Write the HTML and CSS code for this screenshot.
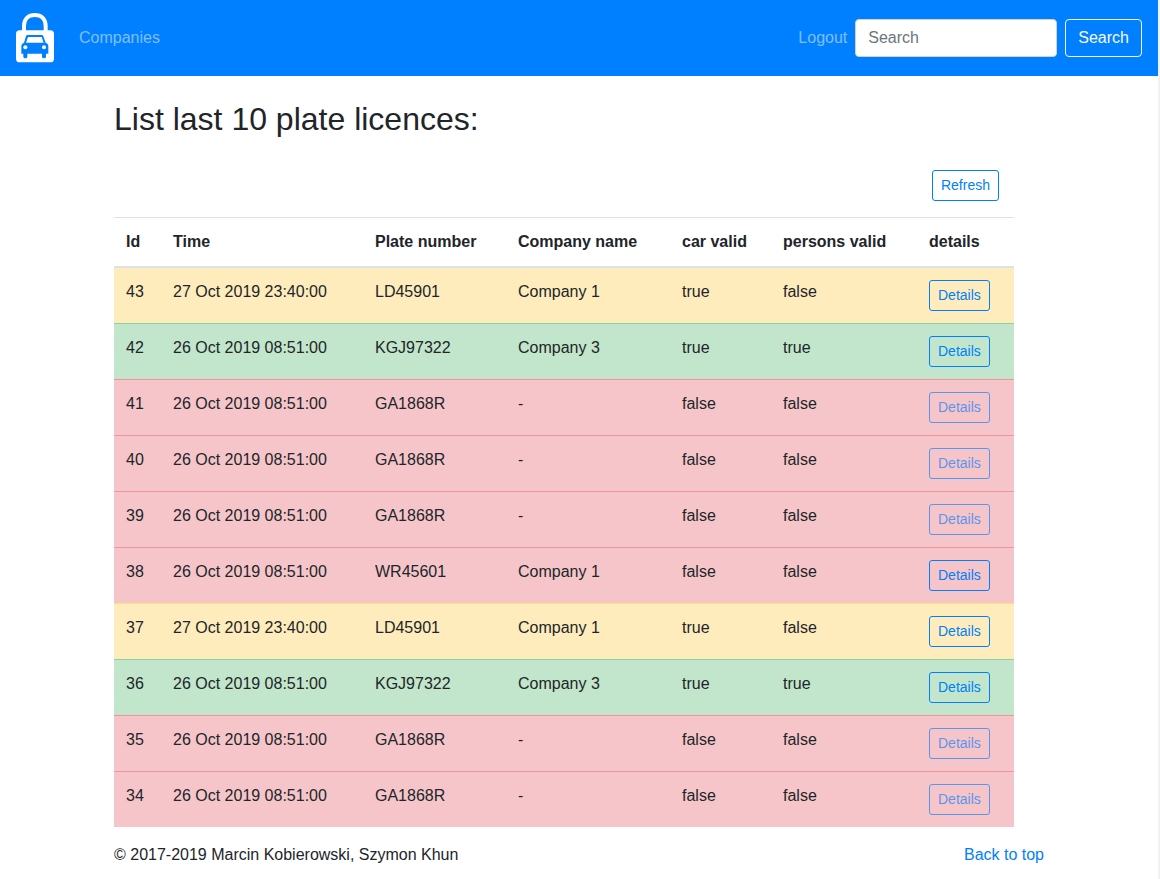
FILE: index.html
```html
<!DOCTYPE html>
<html lang="en">
<head>
<meta charset="utf-8">
<title>Plate licences</title>
<link rel="stylesheet" href="styles.css">
</head>
<body>
<nav class="navbar">
  <a class="brand" href="#" aria-label="Home">
    <svg class="logo" viewBox="48 38 117 150" aria-hidden="true">
      <path d="M72 96V77C72 54 86 44 104.500 44S137 54 137 77V96" fill="none" stroke="#fff" stroke-width="12"/>
      <rect x="48" y="90" width="114" height="96" rx="11" fill="#fff"/>
      <path fill="#007fff" fill-rule="evenodd" d="M83 104H125Q129 104 130 108L137 127Q145 129 145 137V160H138V169Q138 174 132 174T126 169V160H82V169Q82 174 76 174T70 169V160H64V137Q64 129 72 127L78 108Q79 104 83 104ZM84 110L78 127H131L125 110Z"/>
      <circle cx="76" cy="141" r="6" fill="#fff"/>
      <circle cx="132" cy="141" r="6" fill="#fff"/>
    </svg>
  </a>
  <a class="nav-link" href="#">Companies</a>
  <form class="search" onsubmit="return false">
    <a class="nav-link" href="#">Logout</a>
    <input class="search-input" type="search" placeholder="Search" aria-label="Search">
    <button class="btn btn-light" type="submit">Search</button>
  </form>
</nav>
<main class="container">
  <h2 class="title">List last 10 plate licences:</h2>
  <div class="panel">
    <div class="toolbar"><button class="btn btn-small" type="button">Refresh</button></div>
    <table class="table">
      <colgroup><col class="col-id"><col class="col-time"><col class="col-plate"><col class="col-company"><col class="col-car"><col class="col-persons"><col></colgroup>
      <thead>
        <tr><th>Id</th><th>Time</th><th>Plate number</th><th>Company name</th><th>car valid</th><th>persons valid</th><th>details</th></tr>
      </thead>
      <tbody>
        <tr class="warning"><td>43</td><td>27 Oct 2019 23:40:00</td><td>LD45901</td><td>Company 1</td><td>true</td><td>false</td><td><button class="btn btn-small" type="button">Details</button></td></tr>
        <tr class="success"><td>42</td><td>26 Oct 2019 08:51:00</td><td>KGJ97322</td><td>Company 3</td><td>true</td><td>true</td><td><button class="btn btn-small" type="button">Details</button></td></tr>
        <tr class="danger"><td>41</td><td>26 Oct 2019 08:51:00</td><td>GA1868R</td><td>-</td><td>false</td><td>false</td><td><button class="btn btn-small" type="button" disabled>Details</button></td></tr>
        <tr class="danger"><td>40</td><td>26 Oct 2019 08:51:00</td><td>GA1868R</td><td>-</td><td>false</td><td>false</td><td><button class="btn btn-small" type="button" disabled>Details</button></td></tr>
        <tr class="danger"><td>39</td><td>26 Oct 2019 08:51:00</td><td>GA1868R</td><td>-</td><td>false</td><td>false</td><td><button class="btn btn-small" type="button" disabled>Details</button></td></tr>
        <tr class="danger"><td>38</td><td>26 Oct 2019 08:51:00</td><td>WR45601</td><td>Company 1</td><td>false</td><td>false</td><td><button class="btn btn-small" type="button">Details</button></td></tr>
        <tr class="warning"><td>37</td><td>27 Oct 2019 23:40:00</td><td>LD45901</td><td>Company 1</td><td>true</td><td>false</td><td><button class="btn btn-small" type="button">Details</button></td></tr>
        <tr class="success"><td>36</td><td>26 Oct 2019 08:51:00</td><td>KGJ97322</td><td>Company 3</td><td>true</td><td>true</td><td><button class="btn btn-small" type="button">Details</button></td></tr>
        <tr class="danger"><td>35</td><td>26 Oct 2019 08:51:00</td><td>GA1868R</td><td>-</td><td>false</td><td>false</td><td><button class="btn btn-small" type="button" disabled>Details</button></td></tr>
        <tr class="danger"><td>34</td><td>26 Oct 2019 08:51:00</td><td>GA1868R</td><td>-</td><td>false</td><td>false</td><td><button class="btn btn-small" type="button" disabled>Details</button></td></tr>
      </tbody>
    </table>
  </div>
  <footer class="footer">
    <span>© 2017-2019 Marcin Kobierowski, Szymon Khun</span>
    <a class="link" href="#">Back to top</a>
  </footer>
</main>
</body>
</html>
```
FILE: styles.css
```css
*, *::before, *::after { box-sizing: border-box; }
html { min-height: 100%; background: #fff; border-right: 2px solid #f1f1f1; }
body {
  margin: 0;
  font: 16px/24px "Liberation Sans", Arial, sans-serif;
  color: #212529;
}
.navbar {
  display: flex;
  align-items: center;
  min-height: 76px;
  padding: 8px 16px;
  background: #007fff;
}
.brand { display: flex; margin-right: 16px; }
.logo { width: 39px; height: 50px; }
.nav-link { padding: 8px; color: rgba(255, 255, 255, .5); text-decoration: none; }
.search { display: flex; align-items: center; margin-left: auto; }
.search-input {
  width: 202px;
  height: 38px;
  margin-right: 8px;
  padding: 6px 12px;
  font: inherit;
  color: #495057;
  background: #fff;
  border: 1px solid #ced4da;
  border-radius: 4px;
  appearance: none;
}
.search-input::placeholder { color: #6c757d; opacity: 1; }
.btn {
  display: inline-block;
  padding: 6px 12px;
  font: inherit;
  color: #007fff;
  background: transparent;
  border: 1px solid #007fff;
  border-radius: 4px;
  vertical-align: middle;
}
.btn:disabled { opacity: .65; }
.btn-light { color: #f8f9fa; border-color: #f8f9fa; }
.btn-small { padding: 4px 8px; font-size: 14px; line-height: 21px; border-radius: 3px; }
.container { max-width: 960px; margin: 0 auto; padding: 24px 15px 0; }
.title { margin: 0 0 32px; font-size: 32px; line-height: 38px; font-weight: 400; }
.panel { padding-right: 30px; }
.toolbar { display: flex; justify-content: flex-end; padding-right: 15px; margin-bottom: 16px; }
.table { width: 100%; margin-bottom: 16px; border-collapse: collapse; }
.col-id { width: 47px; }
.col-time { width: 202px; }
.col-plate { width: 143px; }
.col-company { width: 164px; }
.col-car { width: 101px; }
.col-persons { width: 146px; }
.table th, .table td {
  padding: 12px;
  text-align: left;
  vertical-align: top;
  border-top: 1px solid #dee2e6;
}
.table thead th { border-bottom: 2px solid #dee2e6; }
.table .warning td { background: #ffecbd; border-color: #ffdf7e; }
.table .success td { background: #c2e6cb; border-color: #8fd19e; }
.table .danger td { background: #f6c5ca; border-color: #ed969e; }
.footer { display: flex; justify-content: space-between; padding-bottom: 12px; }
.link { color: #007fff; text-decoration: none; }
```
